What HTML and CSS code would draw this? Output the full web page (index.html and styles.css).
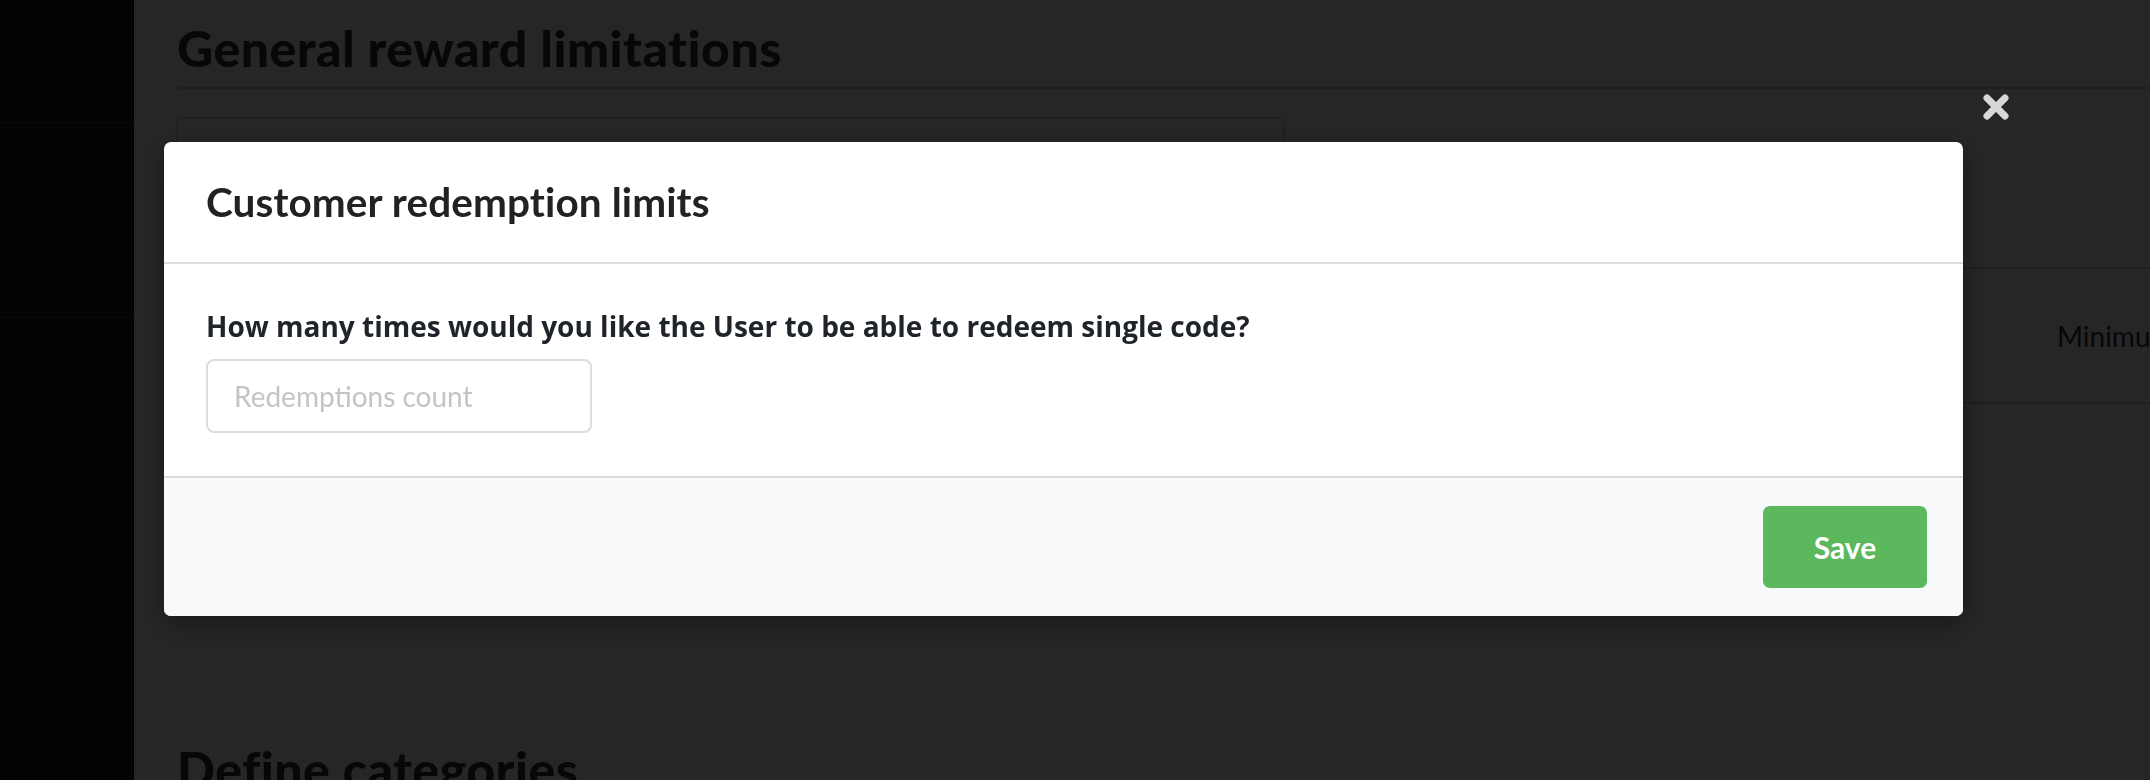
FILE: index.html
```html
<!DOCTYPE html>
<html lang="en">
<head>
<meta charset="utf-8">
<title>Customer redemption limits</title>
<link rel="stylesheet" href="styles.css">
</head>
<body>
<div class="page">
  <aside class="sidebar">
    <div class="side-block side-block--top"></div>
    <div class="side-block side-block--mid"></div>
  </aside>
  <main class="main">
    <h1 class="section-title section-title--first">General reward limitations</h1>
    <div class="limits">
      <div class="card"></div>
      <div class="panel">
        <div class="panel-row">
          <div class="panel-cell panel-cell--wide"></div>
          <div class="panel-cell">Minimum order value</div>
        </div>
      </div>
    </div>
    <h1 class="section-title">Define categories</h1>
  </main>
</div>

<div class="overlay">
  <button class="close" type="button" aria-label="Close">
    <svg width="26" height="26" viewBox="0 0 26 26"><path d="M4 4 L22 22 M22 4 L4 22" stroke="#d8d8d8" stroke-width="7" stroke-linecap="round"/></svg>
  </button>
  <div class="modal">
    <div class="modal-header">
      <h2 class="modal-title">Customer redemption limits</h2>
    </div>
    <div class="modal-body">
      <label class="question" for="count">How many times would you like the User to be able to redeem single code?</label>
      <input class="count-input" id="count" type="text" placeholder="Redemptions count">
    </div>
    <div class="modal-footer">
      <button class="save" type="button">Save</button>
    </div>
  </div>
</div>
</body>
</html>
```

FILE: styles.css
```css
* { box-sizing: border-box; }
html, body {
  margin: 0;
  padding: 0;
  width: 2150px;
  height: 780px;
  overflow: hidden;
  background: #ffffff;
  font-family: "Lato", "Liberation Sans", sans-serif;
}
.page {
  display: flex;
  width: 2150px;
  height: 780px;
}
.sidebar {
  width: 134px;
  flex: none;
  background: #151515;
  display: flex;
  flex-direction: column;
}
.side-block--top {
  height: 123px;
  border-bottom: 1px solid #444;
}
.side-block--mid {
  height: 195px;
  border-bottom: 1px solid #444;
}
.main {
  flex: 1;
  min-width: 0;
  padding-left: 43px;
  overflow: hidden;
}
.section-title {
  margin: 202px 0 0;
  font-family: "Lato", sans-serif;
  font-weight: 900;
  font-size: 50px;
  letter-spacing: 0.5px;
  line-height: 60px;
  color: #333;
  white-space: nowrap;
}
.section-title--first {
  margin-top: 18px;
  padding-bottom: 9px;
  border-bottom: 2px solid #d0d0d0;
}
.limits {
  display: flex;
  align-items: flex-start;
  margin-top: 28px;
  gap: 35px;
}
.card {
  width: 1109px;
  height: 420px;
  flex: none;
  margin-left: -1px;
  border: 2px solid #cfd8d8;
  border-radius: 8px;
}
.panel {
  flex: 1;
  margin-top: 150px;
}
.panel-row {
  display: flex;
  align-items: center;
  height: 137px;
  border-top: 2px solid #cccccc;
  border-bottom: 2px solid #cccccc;
  font-size: 28px;
  color: #333;
  white-space: nowrap;
}
.panel-cell--wide {
  width: 737px;
  flex: none;
}

.overlay {
  position: fixed;
  inset: 0;
  background: rgba(0, 0, 0, 0.85);
  padding: 142px 0 0 164px;
}
.close {
  position: absolute;
  top: 94px;
  left: 1983px;
  width: 26px;
  height: 26px;
  padding: 0;
  border: 0;
  background: none;
  display: flex;
}
.modal {
  width: 1799px;
  background: #ffffff;
  border-radius: 7px;
  box-shadow: 0 8px 30px rgba(0, 0, 0, 0.4);
  overflow: hidden;
}
.modal-header {
  padding: 36px 42px 36px;
  border-bottom: 2px solid #dcdcdc;
}
.modal-title {
  margin: 0;
  font-family: "Lato", sans-serif;
  font-weight: 700;
  font-size: 40.5px;
  letter-spacing: 0.1px;
  line-height: 48px;
  color: #222222;
}
.modal-body {
  padding: 41px 42px 43px;
  display: flex;
  flex-direction: column;
  align-items: flex-start;
}
.question {
  font-family: "Open Sans", "Noto Sans", sans-serif;
  font-weight: 700;
  font-size: 28px;
  line-height: 42px;
  color: #1f232a;
  margin-bottom: 12px;
}
.count-input {
  width: 386px;
  height: 74px;
  border: 2px solid #dddddd;
  border-radius: 8px;
  padding: 0 20px 0 26px;
  font-family: "Lato", sans-serif;
  font-size: 28px;
  color: #333;
  background: #fff;
  outline: none;
}
.count-input::placeholder {
  color: #c4c4c4;
}
.modal-footer {
  display: flex;
  justify-content: flex-end;
  padding: 28px 36px;
  background: #f8f9fb;
  border-top: 2px solid #dcdcdc;
}
.save {
  width: 164px;
  height: 82px;
  border: 0;
  border-radius: 7px;
  background: #5cb85c;
  color: #ffffff;
  font-family: "Lato", sans-serif;
  font-weight: 700;
  font-size: 30px;
}
```
